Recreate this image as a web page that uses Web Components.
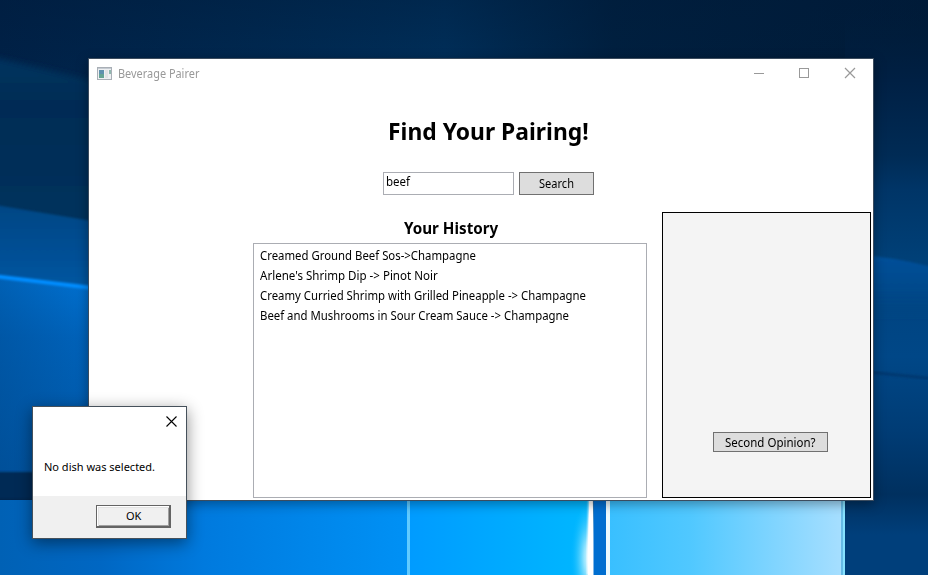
<!DOCTYPE html>
<html lang="en"><head><meta charset="utf-8"><title>Beverage Pairer</title>
<style>
html,body{margin:0;width:928px;height:575px;overflow:hidden}
body{font-family:"Noto Sans","Open Sans",sans-serif;font-size:12px;color:#000}
</style></head><body>
<desk-top>
  <app-window slot="window" caption="Beverage Pairer">
    <pairing-search value="beef"></pairing-search>
    <history-list>
      <history-item fit="216">Creamed Ground Beef Sos-&gt;Champagne</history-item>
      <history-item fit="178">Arlene's Shrimp Dip -&gt; Pinot Noir</history-item>
      <history-item fit="325.5">Creamy Curried Shrimp with Grilled Pineapple -&gt; Champagne</history-item>
      <history-item fit="309">Beef and Mushrooms in Sour Cream Sauce -&gt; Champagne</history-item>
    </history-list>
    <opinion-panel></opinion-panel>
  </app-window>
  <message-box slot="dialog">No dish was selected.</message-box>
</desk-top>
<script>
const define = (name, html, setup) => customElements.define(name, class extends HTMLElement {
  connectedCallback() {
    if (this.shadowRoot) return;
    const t = document.createElement('template');
    t.innerHTML = html;
    this.attachShadow({mode: 'open'}).append(t.content.cloneNode(true));
    if (setup) setup(this, this.shadowRoot);
  }
});

// One line of text scaled horizontally to its nominal width.
define('fit-text', `<style>:host{display:inline-block;white-space:nowrap;transform-origin:0 50%}</style><slot></slot>`, host => {
  const w = +host.getAttribute('w');
  host.style.width = w + 'px';
  const s = host.shadowRoot.querySelector('slot');
  s.style.cssText = 'display:inline-block;transform-origin:0 50%';
  requestAnimationFrame(() => { s.style.transform = 'scaleX(' + w / s.offsetWidth + ')'; });
});

define('wall-paper', `<style>:host{display:block;width:928px;height:575px}svg{display:block}</style>
<svg width="928" height="575" viewBox="0 0 928 575">
<defs>
<linearGradient id="base" x1="0" x2="1"><stop offset="0" stop-color="#002147"/><stop offset=".18" stop-color="#00264d"/><stop offset=".48" stop-color="#002f5a"/><stop offset=".66" stop-color="#002040"/><stop offset="1" stop-color="#001b38"/></linearGradient>
<linearGradient id="dark" x1="0" x2="0" y1="0" y2="1"><stop offset="0" stop-color="#001a38" stop-opacity=".35"/><stop offset="1" stop-color="#001a38" stop-opacity="0"/></linearGradient>
<linearGradient id="l1" x1="0" x2="0" y1="0" y2="1"><stop offset="0" stop-color="#003560"/><stop offset=".25" stop-color="#002c55"/><stop offset="1" stop-color="#00335f"/></linearGradient>
<linearGradient id="l2" x1="0" x2="0" y1="0" y2="1"><stop offset="0" stop-color="#004684"/><stop offset="1" stop-color="#0058a5"/></linearGradient>
<linearGradient id="l3" x1="0" x2="0" y1="0" y2="1"><stop offset="0" stop-color="#0074d6"/><stop offset=".3" stop-color="#0064bd"/><stop offset="1" stop-color="#0057a6"/></linearGradient>
<linearGradient id="l3s" x1="0" x2="1"><stop offset="0" stop-color="#004484" stop-opacity=".4"/><stop offset="1" stop-color="#004484" stop-opacity="0"/></linearGradient>
<linearGradient id="r" x1="0" x2="0" y1="0" y2="1"><stop offset="0" stop-color="#001c39" stop-opacity="0"/><stop offset=".14" stop-color="#002044"/><stop offset=".27" stop-color="#002b55"/><stop offset=".33" stop-color="#003567"/><stop offset=".46" stop-color="#004179"/><stop offset=".55" stop-color="#004583"/><stop offset=".62" stop-color="#004787"/><stop offset=".75" stop-color="#003c75"/><stop offset=".86" stop-color="#00305f"/><stop offset=".93" stop-color="#003f7b"/><stop offset="1" stop-color="#003f7b"/></linearGradient>
<linearGradient id="rb" x1="0" x2="0" y1="0" y2="1"><stop offset="0" stop-color="#00509a"/><stop offset=".5" stop-color="#004a8c"/><stop offset="1" stop-color="#004787" stop-opacity="0"/></linearGradient>
<linearGradient id="b1" x1="0" x2="1"><stop offset="0" stop-color="#0061b5"/><stop offset=".25" stop-color="#0067c3"/><stop offset=".5" stop-color="#007ade"/><stop offset="1" stop-color="#0091f5"/></linearGradient>
<linearGradient id="b2" x1="0" x2="1"><stop offset="0" stop-color="#009bff"/><stop offset="1" stop-color="#00b8ff"/></linearGradient>
<linearGradient id="b3" x1="0" x2="1"><stop offset="0" stop-color="#38bfff"/><stop offset=".35" stop-color="#50c8ff"/><stop offset="1" stop-color="#a8dfff"/></linearGradient>
<radialGradient id="glow"><stop offset="0" stop-color="#fff"/><stop offset=".3" stop-color="#c8f4ff" stop-opacity=".75"/><stop offset="1" stop-color="#00b8ff" stop-opacity="0"/></radialGradient>
<filter id="f"><feGaussianBlur stdDeviation="1"/></filter>
<filter id="f3" x="-20%" width="140%"><feGaussianBlur stdDeviation="3"/></filter>
</defs>
<rect width="928" height="575" fill="url(#base)"/><rect width="928" height="70" fill="url(#dark)"/>
<path d="M-30 52L0 59Q35 66 130 91V260H-30Z" fill="url(#l1)" filter="url(#f3)"/>
<path d="M-10 204L110 224V300H-10Z" fill="url(#l2)" filter="url(#f)"/>
<path d="M0 276L100 289V480H0Z" fill="url(#l3)"/><path d="M0 276L100 289V480H0Z" fill="url(#l3s)"/>
<path d="M-15 275L110 290" stroke="#008dff" stroke-width="4" filter="url(#f)"/>
<path d="M-10 472H110V499H-10Z" fill="#002955" filter="url(#f)"/>
<path d="M845 0H928V575H845Z" fill="url(#r)"/>
<path d="M860 255Q895 257 940 269V320H860Z" fill="url(#rb)" filter="url(#f)"/>
<path d="M868 372L935 379" stroke="#00396f" stroke-width="3" filter="url(#f)"/>
<rect y="500" width="408" height="75" fill="url(#b1)"/><rect x="408" y="490" width="184" height="85" fill="url(#b2)"/>
<rect x="407" y="490" width="3" height="85" fill="#60caff"/>
<ellipse cx="590" cy="558" rx="20" ry="60" fill="url(#glow)"/>
<path d="M589 490H592.5L594 555V575H587V550Z" fill="#fff" filter="url(#f)"/><path d="M589.5 490H592.5L594 550V575H588V550Z" fill="#fff"/>
<rect x="593.5" y="490" width="13" height="85" fill="#006ed0"/><rect x="606" y="490" width="239" height="85" fill="url(#b3)"/><rect x="606" y="490" width="4" height="85" fill="#ecfaff"/>
<rect x="841" y="490" width="2" height="85" fill="#66bbe6"/><rect x="843" y="490" width="2" height="85" fill="#86e2ff"/>
</svg>`);

define('desk-top', `<style>:host{display:block;position:relative;width:928px;height:575px;overflow:hidden}
::slotted(*){position:absolute}::slotted(app-window){left:88px;top:58px}::slotted(message-box){left:32px;top:406px}</style>
<wall-paper></wall-paper><slot name="window"></slot><slot name="dialog"></slot>`);

define('push-button', `<style>:host{display:flex;box-sizing:border-box;align-items:center;justify-content:center;border:1px solid #707070;background:#ddd;line-height:16px}</style><slot></slot>`);

define('app-window', `<style>
:host{display:grid;box-sizing:border-box;width:786px;height:443px;border:1px solid #3c4c5e;background:#fff;box-shadow:0 3px 11px rgba(0,0,0,.36);grid-template:29px 124px 1fr / 164px 394px 15px 209px;padding-right:2px}
header{grid-area:1/1/2/5;display:flex;align-items:center;padding-left:8px;color:#999}
.t{margin-left:6px;flex:1}
.c{display:block;margin:-1px 15px 0 0}
::slotted(pairing-search){grid-area:2/1/3/5}
::slotted(history-list){grid-area:3/2}
::slotted(opinion-panel){grid-area:3/4}
</style>
<header><svg width="15" height="13" viewBox="0 0 15 13" shape-rendering="crispEdges"><rect x=".5" y=".5" width="14" height="12" fill="#eef0f2" stroke="#a9afb6"/><rect x="1" y="1" width="13" height="1" fill="#c5cbd2"/><rect x="2" y="3" width="5" height="8" fill="#5f91ae"/><rect x="2" y="7" width="5" height="4" fill="#65a494"/><rect x="8" y="3" width="3" height="8" fill="#e2e3e5"/><rect x="12" y="3" width="2" height="4" fill="#91b9b0"/></svg>
<span class="t"><fit-text w="81"></fit-text></span>
<svg class="c" width="102" height="12" viewBox="0 0 102 12" fill="none" stroke="#999"><path d="M0 6.5H10M45.5 1.5H54.5V10.5H45.5Z" shape-rendering="crispEdges"/><path d="M91 1L101 11M101 1L91 11" stroke-width="1.2"/></svg></header>
<slot></slot>`, (h, r) => {
  r.querySelector('fit-text').textContent = h.getAttribute('caption');
});

define('pairing-search', `<style>
:host{display:flex;flex-direction:column;align-items:center}
h1{font-size:24px;line-height:32px;margin:27px 0 0 17px;font-weight:700}
.row{display:flex;gap:5px;margin:25px 0 0 16px;align-items:stretch}
.in{box-sizing:border-box;width:131px;height:23px;border:1px solid #abadb3;padding:0 2px;line-height:17px;background:#fff}
push-button{width:75px;height:23px}
</style><h1><fit-text w="201">Find Your Pairing!</fit-text></h1>
<div class="row"><div class="in"><fit-text w="24" class="v"></fit-text></div><push-button><fit-text w="35">Search</fit-text></push-button></div>`, (h, r) => {
  r.querySelector('.v').textContent = h.getAttribute('value');
});

define('history-list', `<style>
:host{display:flex;flex-direction:column}
h2{font-size:16px;line-height:22px;font-weight:700;margin:5px 0 4px 151px;height:22px}
.list{flex:none;box-sizing:border-box;height:255px;border:1px solid #abadb3;padding:2px 6px;background:#fff}
</style><h2><fit-text w="94">Your History</fit-text></h2><div class="list"><slot></slot></div>`);

define('history-item', `<style>:host{display:block;height:20px;line-height:20px}</style><fit-text><slot></slot></fit-text>`, (h, r) => {
  const f = r.querySelector('fit-text');
  f.replaceWith(Object.assign(document.createElement('template'), {innerHTML: '<fit-text w="' + h.getAttribute('fit') + '"><slot></slot></fit-text>'}).content);
});

define('opinion-panel', `<style>
:host{display:flex;box-sizing:border-box;height:286px;border:1px solid #000;background:#f4f4f4;align-items:flex-end;padding:0 0 45px 50px}
push-button{width:115px;height:20px;padding-top:1px}</style><push-button><fit-text w="91">Second Opinion?</fit-text></push-button>`);

define('message-box', `<style>
:host{display:flex;flex-direction:column;box-sizing:border-box;width:155px;height:133px;border:1px solid #46515b;background:#fff;box-shadow:0 4px 15px rgba(0,0,0,.45);font-size:11px}
.top{display:flex;justify-content:flex-end;padding:9px 9px 0 0;height:20px}
.msg{flex:1;padding:22px 0 0 11px;line-height:17px}
footer{height:42px;background:#f0f0f0;display:flex;justify-content:flex-end;align-items:flex-start;padding-right:15px;box-sizing:border-box}
.ok{margin-top:9px;box-sizing:border-box;width:75px;height:23px;border:1px solid #646464;border-right-width:2px;border-bottom-width:2px;background:#f0f0f0;display:flex;align-items:center;justify-content:center;padding:0 0 2px 1px;box-shadow:inset 1px 1px #fff,inset 2px 2px #e3e3e3,inset -1px -1px #a0a0a0}
</style><div class="top"><svg width="11" height="11" viewBox="0 0 11 11" stroke="#000" stroke-width="1.1"><path d="M.5 .5L10.5 10.5M10.5 .5L.5 10.5"/></svg></div>
<div class="msg"><fit-text w="111"><slot></slot></fit-text></div><footer><div class="ok"><fit-text w="15">OK</fit-text></div></footer>`);
</script></body></html>
